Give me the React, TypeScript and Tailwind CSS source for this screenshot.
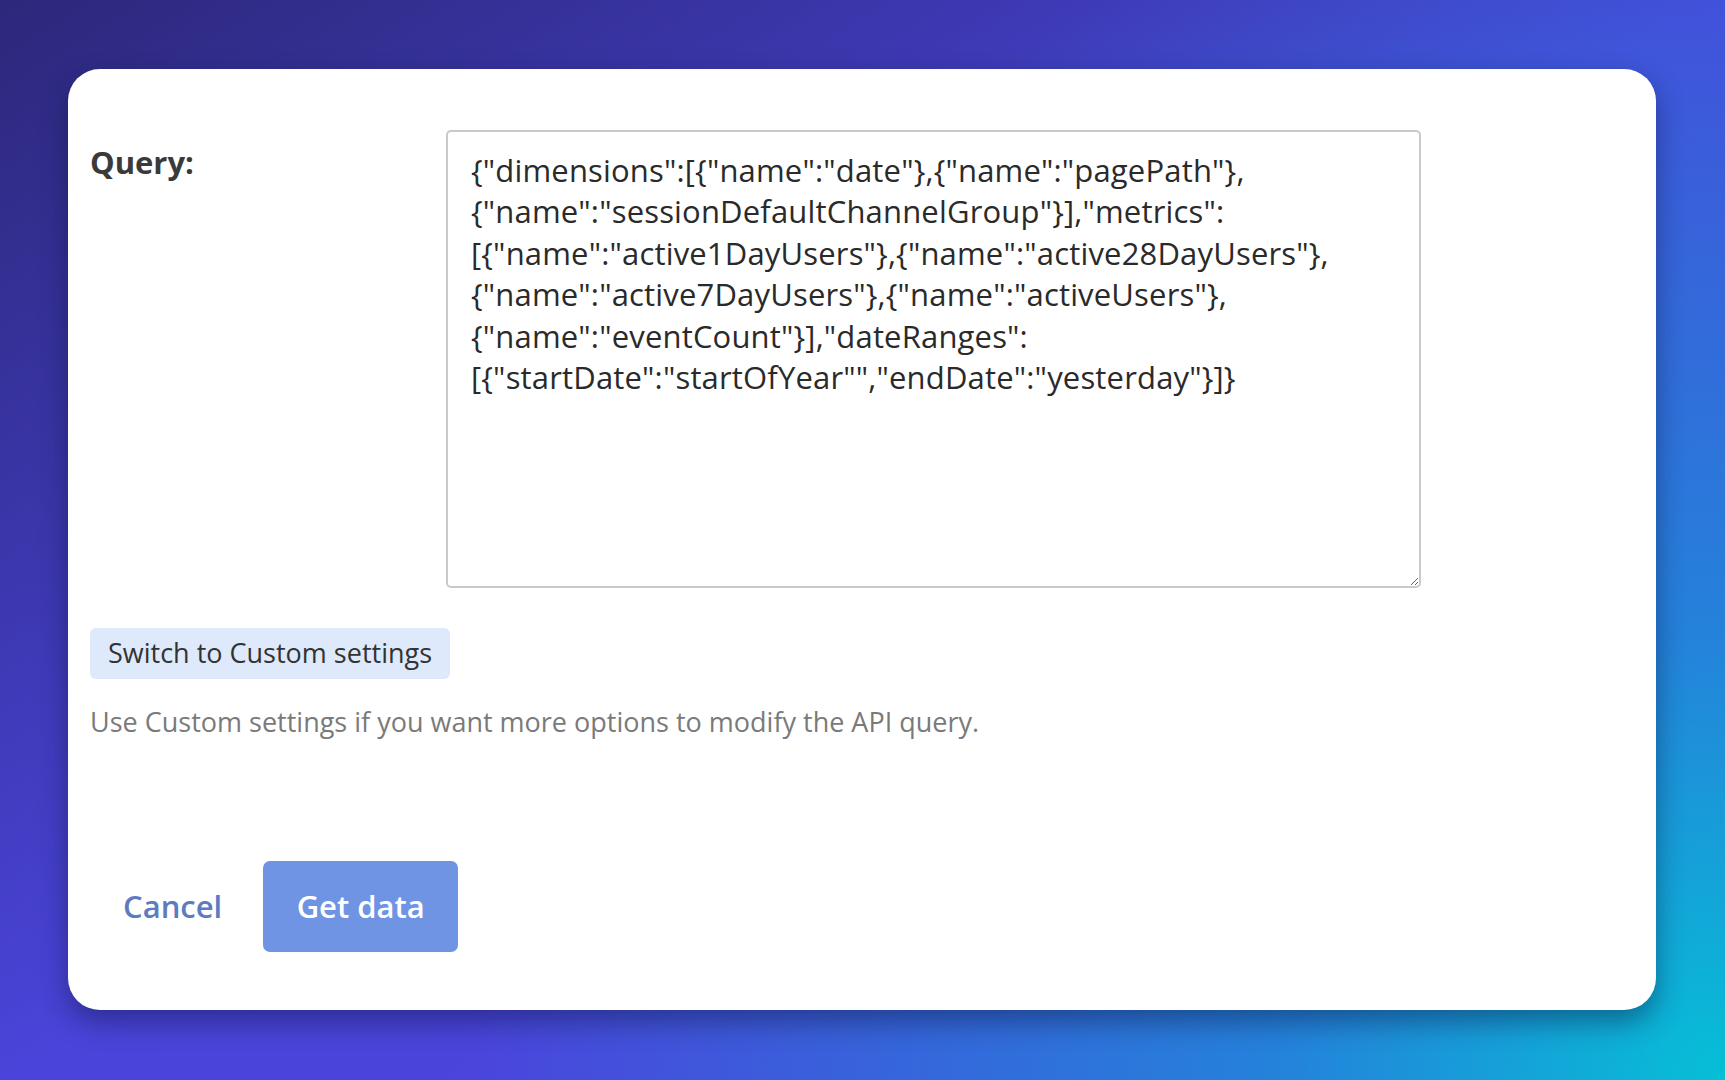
import React from "react";

const QUERY = [
  '{"dimensions":[{"name":"date"},{"name":"pagePath"},',
  '{"name":"sessionDefaultChannelGroup"}],"metrics":',
  '[{"name":"active1DayUsers"},{"name":"active28DayUsers"},',
  '{"name":"active7DayUsers"},{"name":"activeUsers"},',
  '{"name":"eventCount"}],"dateRanges":',
  '[{"startDate":"startOfYear"","endDate":"yesterday"}]}',
].join("\n");

export default function App() {
  return (
    <div
      className="w-full h-[1080px] flex pl-[68px] pr-[69px] pt-[69px] pb-[70px] bg-[radial-gradient(circle_at_100%_100%,#06bfd6_0%,rgba(24,150,218,0.75)_22%,rgba(60,90,222,0)_62%),linear-gradient(to_bottom_right,#2c287a_0%,#4a44da_50%,#4b46de_100%)]"
      style={{ fontFamily: '"Open Sans", "Noto Sans", sans-serif' }}
    >
      <div className="flex-1 bg-white rounded-[32px] shadow-[0_12px_28px_rgba(10,20,60,0.45)] pl-[22px] pt-[61px] flex flex-col">
        <div className="flex">
          <div className="w-[356px] pt-[14px] text-[31px] leading-[36px] font-bold text-[#3a3a3a]">
            Query:
          </div>
          <textarea
            readOnly
            value={QUERY}
            className="w-[975px] h-[458px] border-2 border-[#c9c9c9] rounded-[5px] pl-[23px] pr-4 pt-[18px] text-[31px] tracking-[0.17px] leading-[41.4px] text-[#2a2a2a] outline-none resize"
            style={{ fontFamily: '"Open Sans", "Noto Sans", sans-serif' }}
          />
        </div>
        <div className="mt-[40px]">
          <button className="h-[51px] px-[18px] rounded-[6px] bg-[#dee9fb] text-[27px] text-[#333333]">
            Switch to Custom settings
          </button>
        </div>
        <p className="mt-[26px] text-[27px] leading-[34px] text-[#7a7a7a]">
          Use Custom settings if you want more options to modify the API query.
        </p>
        <div className="mt-[122px] flex items-center">
          <button className="px-[33px] text-[31px] text-[#5d7cbf] font-semibold">Cancel</button>
          <button className="ml-[8px] w-[195px] h-[91px] rounded-[7px] bg-[#6f94e3] text-white text-[31px] font-semibold">
            Get data
          </button>
        </div>
      </div>
    </div>
  );
}
